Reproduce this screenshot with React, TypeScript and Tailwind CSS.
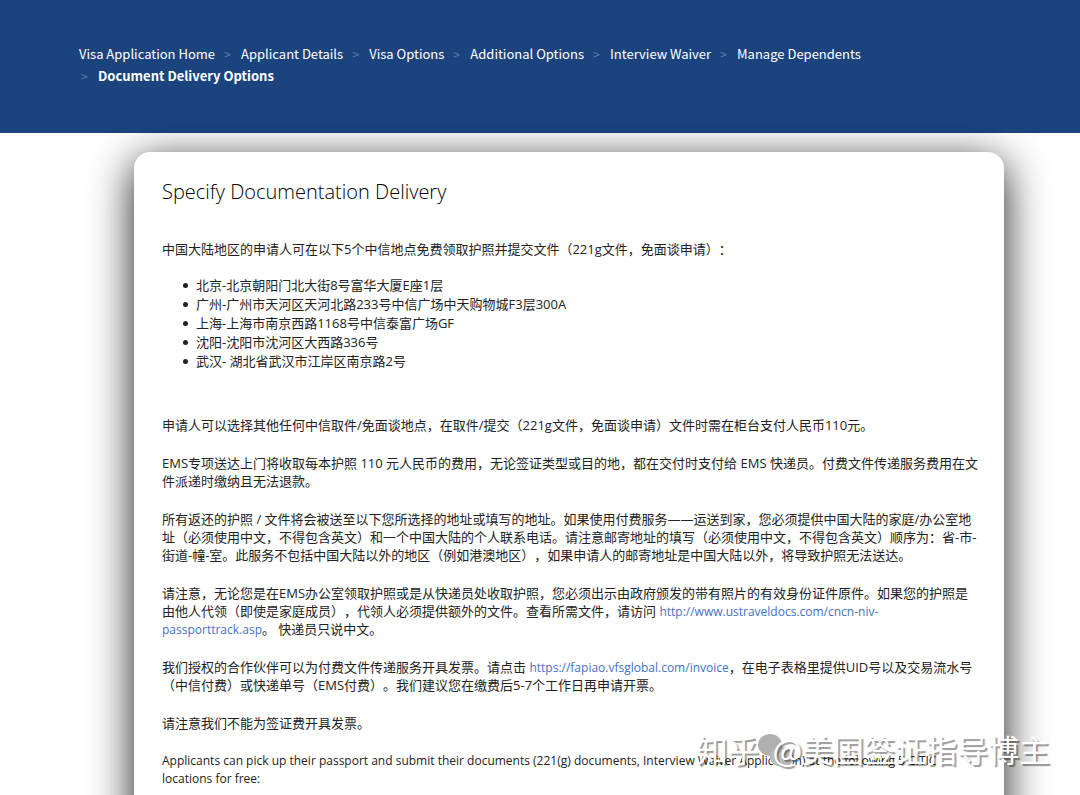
import React from "react";

const steps = [
  "Visa Application Home",
  "Applicant Details",
  "Visa Options",
  "Additional Options",
  "Interview Waiver",
  "Manage Dependents",
];

const locations = [
  "北京-北京朝阳门北大街8号富华大厦E座1层",
  "广州-广州市天河区天河北路233号中信广场中天购物城F3层300A",
  "上海-上海市南京西路1168号中信泰富广场GF",
  "沈阳-沈阳市沈河区大西路336号",
  "武汉- 湖北省武汉市江岸区南京路2号",
];

function Breadcrumb() {
  return (
    <nav
      aria-label="Breadcrumb"
      className="bg-[#1b447f] px-[79px] pt-[43px] pb-[46px] font-['Noto_Sans_CJK_SC',sans-serif] text-[13px] leading-[22px] text-white"
    >
      <ol className="flex max-w-[860px] flex-wrap">
        {steps.map((step, i) => (
          <li key={step} className="flex">
            {i > 0 && <span className="w-[26px] pl-[9px] text-xs leading-[22px] text-[#5f7ba5]">&gt;</span>}
            <a href="#">{step}</a>
          </li>
        ))}
        <li className="flex w-full font-bold" aria-current="page">
          <span className="w-[19px] pl-[2px] text-xs leading-[22px] font-normal text-[#5f7ba5]">&gt;</span>
          Document Delivery Options
        </li>
      </ol>
    </nav>
  );
}

function Watermark() {
  return (
    <div className="pointer-events-none absolute right-[30px] bottom-[24px] text-[31px] leading-[44px] whitespace-nowrap text-white [text-shadow:2px_2px_1px_rgba(0,0,0,0.4)] font-['Noto_Sans_CJK_SC',sans-serif]">
      <svg viewBox="0 0 40 36" className="absolute top-[6px] left-[60px] h-9 w-10" aria-hidden="true">
        <ellipse cx="13" cy="12" rx="12" ry="11" fill="#b0b0b0" />
        <ellipse cx="25" cy="24" rx="12" ry="10" fill="#bcbcbc" />
      </svg>
      <div className="relative flex gap-[14px]">
        <span>知乎</span>
        <span>@美国签证指导博主</span>
      </div>
    </div>
  );
}

export default function App() {
  return (
    <div className="relative h-screen overflow-hidden bg-white">
      <Breadcrumb />
      <main className="mt-[19px] mr-[76px] ml-[134px] min-h-screen rounded-[16px] bg-white pt-6 pr-5 pl-7 text-[13px] leading-[18px] text-[#222] shadow-[0_10px_44px_rgba(0,0,0,0.9)] [text-spacing-trim:space-all] font-['Open_Sans','Noto_Sans_CJK_SC',sans-serif]">
        <h1 className="text-[20px] leading-8 font-light text-black">Specify Documentation Delivery</h1>
        <p className="mt-8">中国大陆地区的申请人可在以下5个中信地点免费领取护照并提交文件（221g文件，免面谈申请）：</p>
        <ul className="mt-[18px] flex flex-col gap-px">
          {locations.map((place) => (
            <li key={place} className="flex items-center gap-2 pl-[21px]">
              <span className="size-[5px] rounded-full bg-[#222]" />
              {place}
            </li>
          ))}
        </ul>
        <div className="mt-[46px] flex flex-col gap-5">
          <p>申请人可以选择其他任何中信取件/免面谈地点，在取件/提交（221g文件，免面谈申请）文件时需在柜台支付人民币110元。</p>
          <p>
            EMS专项送达上门将收取每本护照 110 元人民币的费用，无论签证类型或目的地，都在交付时支付给 EMS 快递员。付费文件传递服务费用在文<br />
            件派递时缴纳且无法退款。
          </p>
          <p>
            所有返还的护照 / 文件将会被送至以下您所选择的地址或填写的地址。如果使用付费服务——运送到家，您必须提供中国大陆的家庭/办公室地<br />
            址（必须使用中文，不得包含英文）和一个中国大陆的个人联系电话。请注意邮寄地址的填写（必须使用中文，不得包含英文）顺序为：省-市-<br />
            街道-幢-室。此服务不包括中国大陆以外的地区（例如港澳地区），如果申请人的邮寄地址是中国大陆以外，将导致护照无法送达。
          </p>
          <p>
            请注意，无论您是在EMS办公室领取护照或是从快递员处收取护照，您必须出示由政府颁发的带有照片的有效身份证件原件。如果您的护照是<br />
            由他人代领（即使是家庭成员），代领人必须提供额外的文件。查看所需文件，请访问{" "}
            <a href="#" className="text-[12px] leading-none text-[#4472c4]">http://www.ustraveldocs.com/cncn-niv-<br />passporttrack.asp</a>。 快递员只说中文。
          </p>
          <p>
            我们授权的合作伙伴可以为付费文件传递服务开具发票。请点击{" "}
            <a href="#" className="text-[12px] leading-none text-[#4472c4]">https://fapiao.vfsglobal.com/invoice</a>，在电子表格里提供UID号以及交易流水号<br />
            （中信付费）或快递单号（EMS付费）。我们建议您在缴费后5-7个工作日再申请开票。
          </p>
          <p>请注意我们不能为签证费开具发票。</p>
          <p className="text-[12px]">
            Applicants can pick up their passport and submit their documents (221(g) documents, Interview Waiver Application) at the following 5 CITIC<br />
            locations for free:
          </p>
        </div>
      </main>
      <Watermark />
    </div>
  );
}
